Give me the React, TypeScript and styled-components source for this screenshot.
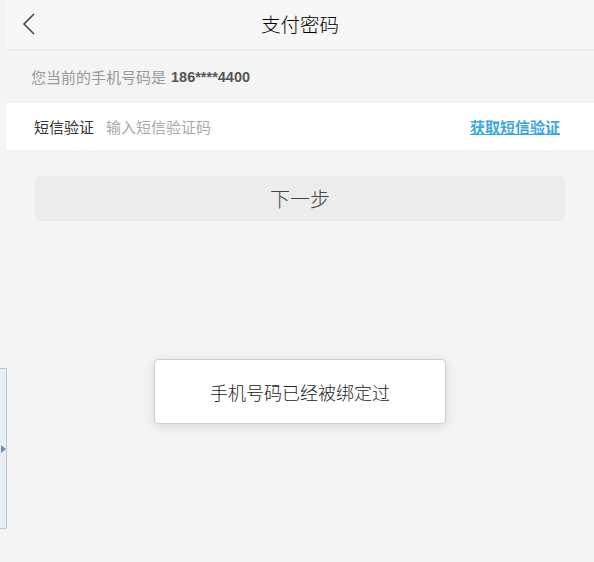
import React from 'react';
import styled, { createGlobalStyle } from 'styled-components';

const GlobalStyle = createGlobalStyle`
  html, body {
    margin: 0;
    padding: 0;
    background: #f4f4f4;
    font-family: "Microsoft YaHei", "Noto Sans CJK SC", "Liberation Sans", sans-serif;
  }
`;

const Page = styled.div`
  position: relative;
  min-height: 562px;
  padding-left: 6px;
  box-sizing: border-box;
`;

const Header = styled.header`
  position: relative;
  height: 49px;
  background: #f7f7f7;
  border-bottom: 1px solid #e9e9e9;
  display: flex;
  align-items: center;
  justify-content: center;
`;

const BackButton = styled.button`
  position: absolute;
  left: 12px;
  top: 12px;
  width: 22px;
  height: 24px;
  padding: 0;
  border: 0;
  background: none;
  display: flex;
  align-items: center;
  justify-content: center;
`;

const Title = styled.h1`
  margin: 0 0 2px;
  font-size: 19.5px;
  font-weight: 300;
  color: #000;
`;

const PhoneLine = styled.p`
  margin: 0;
  height: 53px;
  padding-left: 25px;
  display: flex;
  align-items: center;
  font-size: 15px;
  color: #999;

  strong {
    margin-left: 5px;
    font-family: "Liberation Sans", Arial, sans-serif;
    font-size: 14.5px;
    color: #555;
    font-weight: 700;
  }
`;

const FieldRow = styled.div`
  height: 47px;
  background: #fff;
  display: flex;
  align-items: center;
  padding: 0 34px 0 28px;
`;

const FieldLabel = styled.span`
  font-size: 15px;
  color: #333;
  margin-right: 12px;
`;

const CodeInput = styled.input`
  flex: 1;
  border: 0;
  outline: none;
  background: transparent;
  font-family: inherit;
  font-size: 15px;
  color: #333;
  padding: 0;

  &::placeholder {
    color: #aaa;
  }
`;

const SendLink = styled.a`
  font-size: 15px;
  font-weight: 700;
  color: #3ba7dc;
  text-decoration: underline;
  cursor: pointer;
`;

const NextButton = styled.button`
  display: block;
  margin: 26px 29px 0;
  width: calc(100% - 58px);
  height: 45px;
  border: 0;
  border-radius: 5px;
  background: #ececec;
  font-family: inherit;
  font-size: 20px;
  font-weight: 300;
  color: #444;
`;

const SideTab = styled.div`
  position: absolute;
  left: -1px;
  top: 368px;
  width: 6px;
  height: 159px;
  background: #e8eef4;
  border: 1px solid #b9cbda;
  display: flex;
  align-items: center;
`;

const SideArrow = styled.span`
  width: 0;
  height: 0;
  border-top: 4px solid transparent;
  border-bottom: 4px solid transparent;
  border-left: 5px solid #6e8fb0;
  margin-left: 1px;
`;

const Toast = styled.div`
  position: absolute;
  left: 154px;
  top: 359px;
  width: 292px;
  height: 65px;
  box-sizing: border-box;
  background: #fff;
  border: 1px solid #cfcfcf;
  border-radius: 4px;
  box-shadow: 0 2px 12px rgba(0, 0, 0, 0.12);
  display: flex;
  align-items: center;
  justify-content: center;
  font-size: 18px;
  font-weight: 300;
  color: #222;
`;

export default function App() {
  return (
    <>
      <GlobalStyle />
      <Page>
        <Header>
          <BackButton aria-label="返回">
            <svg width="14" height="22" viewBox="0 0 14 22" fill="none">
              <path d="M12 1 L2 11 L12 21" stroke="#444" strokeWidth="1.6" />
            </svg>
          </BackButton>
          <Title>支付密码</Title>
        </Header>
        <PhoneLine>
          您当前的手机号码是<strong>186****4400</strong>
        </PhoneLine>
        <FieldRow>
          <FieldLabel>短信验证</FieldLabel>
          <CodeInput placeholder="输入短信验证码" />
          <SendLink>获取短信验证</SendLink>
        </FieldRow>
        <NextButton>下一步</NextButton>
        <SideTab>
          <SideArrow />
        </SideTab>
        <Toast>手机号码已经被绑定过</Toast>
      </Page>
    </>
  );
}
